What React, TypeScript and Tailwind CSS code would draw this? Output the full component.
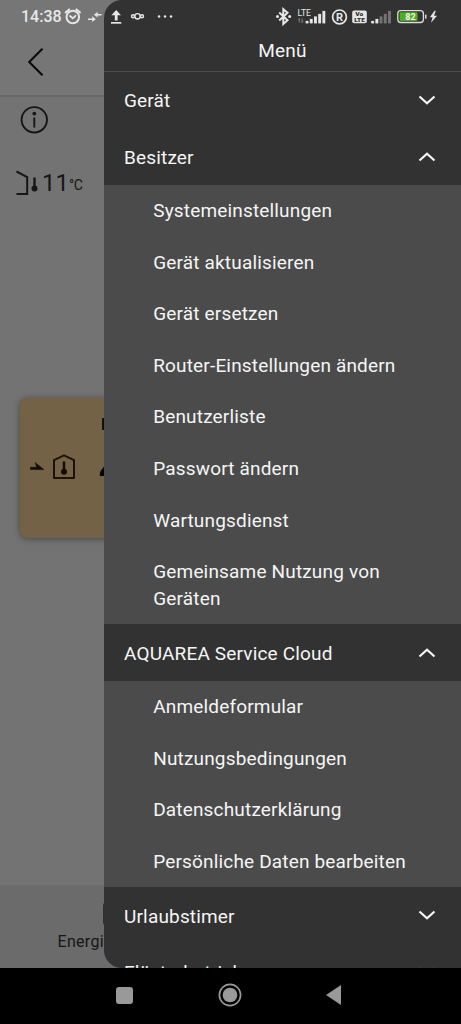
type Section = {
  title: string;
  open?: boolean;
  items?: string[];
};

const sections: Section[] = [
  { title: "Gerät" },
  {
    title: "Besitzer",
    open: true,
    items: [
      "Systemeinstellungen",
      "Gerät aktualisieren",
      "Gerät ersetzen",
      "Router-Einstellungen ändern",
      "Benutzerliste",
      "Passwort ändern",
      "Wartungsdienst",
      "Gemeinsame Nutzung von Geräten",
    ],
  },
  {
    title: "AQUAREA Service Cloud",
    open: true,
    items: [
      "Anmeldeformular",
      "Nutzungsbedingungen",
      "Datenschutzerklärung",
      "Persönliche Daten bearbeiten",
    ],
  },
  { title: "Urlaubstimer" },
  { title: "Flüsterbetrieb" },
];

function Chevron({ up }: { up?: boolean }) {
  return (
    <svg
      className="mb-[3px] h-[10px] w-[18px]"
      viewBox="0 0 18 10"
      fill="none"
      stroke="#f5f5f5"
      strokeWidth="2.2"
    >
      <path d={up ? "M1.5 8.5 9 1.8l7.5 6.7" : "M1.5 1.5 9 8.2l7.5-6.7"} />
    </svg>
  );
}

function Signal({ x, strong }: { x: number; strong: number }) {
  return (
    <g>
      {[2.5, 4.5, 7, 9.5, 12.5].map((h, i) => (
        <rect
          key={h}
          x={x + i * 4.2}
          y={23.4 - h}
          width="2.9"
          height={h}
          fill={i < strong ? "#e6e6e6" : "#747474"}
        />
      ))}
    </g>
  );
}

function StatusBar() {
  return (
    <div className="pointer-events-none absolute inset-x-0 top-0 flex h-8 items-center">
      <span className="mt-0.5 ml-[21px] w-[42px] text-[16px] leading-8 font-medium text-[#e8e8e8]">
        14:38
      </span>
      <svg
        className="h-8 w-[398px] shrink-0"
        viewBox="63 0 398 32"
        fill="none"
        stroke="#e6e6e6"
      >
        {/* alarm clock */}
        <g strokeWidth="2" strokeLinecap="round">
          <circle cx="72.800" cy="17" r="6.300" />
          <path d="m65.600 12.400 3.500-3M80 12.400l-3.500-3" />
          <path d="m70 16 2.800 2.300 2.700-2.500" strokeWidth="1.800" />
        </g>
        <g fill="#e6e6e6" stroke="none">
          {/* transfer arrows */}
          <path d="M88 18.400h4.200v-2.100l3.600 2.900-3.600 2.900v-2.100H88zM101.500 13.900h-3.900v-2.100L94 14.700l3.600 2.900v-2.100h3.900z" />
          {/* upload */}
          <path d="M114.800 20.600v-5.300h-3.400l4.800-5.200 4.800 5.200h-3.400v5.300z" />
          <rect x="111" y="22" width="10.300" height="1.700" />
          <circle cx="159" cy="16.400" r="1.250" />
          <circle cx="165" cy="16.400" r="1.250" />
          <circle cx="171" cy="16.400" r="1.250" />
        </g>
        {/* linked nodes */}
        <g strokeWidth="1.400">
          <circle cx="137.500" cy="16.300" r="2.700" />
          <circle cx="133" cy="16.300" r="1.500" />
          <circle cx="142" cy="16.300" r="1.500" />
        </g>
        {/* bluetooth */}
        <path
          strokeWidth="2"
          d="m279.200 12.600 8.300 7.700-4.200 3.700V9.200l4.200 3.500-8.300 7.700"
        />
        <g fill="#e6e6e6" stroke="none">
          <circle cx="277.500" cy="16.500" r="1.500" />
          <circle cx="289.700" cy="16.500" r="1.500" />
          <text
            x="297.500"
            y="15.500"
            fontSize="9"
            textLength="13.500"
            lengthAdjust="spacingAndGlyphs"
          >
            LTE
          </text>
        </g>
        <path
          strokeWidth=".9"
          stroke="#8a8a8a"
          d="M299.300 22.500v-4l-1.200 1.300M302 18.500v4l1.200-1.300"
        />
        <g stroke="none">
          <Signal x={305.600} strong={5} />
          <Signal x={371.200} strong={2} />
        </g>
        {/* registered mark */}
        <circle cx="339.500" cy="16.900" r="6.900" strokeWidth="1.700" />
        <text
          x="339.600"
          y="20.800"
          fontSize="11"
          fontWeight="700"
          textAnchor="middle"
          fill="#e6e6e6"
          stroke="none"
        >
          R
        </text>
        {/* VoLTE */}
        <rect
          x="352.200"
          y="10.500"
          width="14.600"
          height="12.700"
          rx="2"
          fill="#e6e6e6"
          stroke="none"
        />
        <g fill="#2e2e2e" stroke="none" fontSize="5.200" fontWeight="900">
          <text
            x="355.200"
            y="16"
            textLength="8"
            lengthAdjust="spacingAndGlyphs"
          >
            Vo
          </text>
          <text
            x="354.200"
            y="22"
            textLength="10.800"
            lengthAdjust="spacingAndGlyphs"
          >
            LTE
          </text>
        </g>
        {/* battery */}
        <rect
          x="397.800"
          y="10.700"
          width="25.600"
          height="11.800"
          rx="3"
          stroke="#dcdcdc"
          strokeWidth="1.300"
        />
        <rect
          x="399.600"
          y="12.300"
          width="18"
          height="8.600"
          rx="1.300"
          fill="#4caf1c"
          stroke="none"
        />
        <rect
          x="425"
          y="14.600"
          width="1.500"
          height="4"
          fill="#dcdcdc"
          stroke="none"
        />
        <text
          x="410.400"
          y="19.800"
          fontSize="9"
          fontWeight="700"
          textAnchor="middle"
          fill="#f4f4f4"
          stroke="none"
        >
          82
        </text>
        <path
          d="m434.500 10.700-4.600 6.600h2.700l-1.600 5.500 6-7h-3l1.800-5.100z"
          fill="#e6e6e6"
          stroke="none"
        />
      </svg>
    </div>
  );
}

function HomeScreen() {
  return (
    <div className="flex h-[968px] flex-col bg-[#737373] text-[#161616]">
      <header className="flex h-[97px] shrink-0 items-center border-b-2 border-[#686868] bg-[#767676] pt-[29px] pl-7">
        <svg
          className="h-7 w-4"
          viewBox="0 0 16 28"
          fill="none"
          stroke="#0c0c0c"
          strokeWidth="2.1"
        >
          <path d="M14.500 .7 1.200 14l13.300 13.300" />
        </svg>
      </header>

      <main className="flex-1">
        <svg
          className="mt-[9px] ml-5 h-7 w-7"
          viewBox="0 0 28 28"
          fill="none"
          stroke="#161616"
          strokeWidth="1.900"
        >
          <circle cx="14.300" cy="13.800" r="12.700" />
          <circle cx="14.300" cy="7.600" r="1.900" fill="#161616" stroke="none" />
          <path d="M14.300 11.500v10" />
        </svg>

        <div className="mt-[34px] ml-4 flex h-[30px] items-center">
          <svg
            className="h-[30px] w-[24px]"
            viewBox="16 168 24 30"
            fill="none"
            stroke="#161616"
            strokeWidth="2"
          >
            <path d="m16.500 171.500 10.700 5.500v17H16.500" />
            <path d="M34.500 177.500v11" strokeWidth="2.400" />
            <circle cx="34.500" cy="188.400" r="3" fill="#161616" stroke="none" />
          </svg>
          <span className="ml-[2px] text-[24px] leading-none">11</span>
          <span className="mt-1 text-[14px] leading-none tracking-[-0.4px]">
            °C
          </span>
        </div>

        <div className="mt-[200px] ml-5 flex h-[140px] w-[421px] items-center rounded-lg bg-[#736246] shadow-[0_1px_7px_rgba(0,0,0,0.4)]">
          <svg className="h-[140px] w-[90px]" viewBox="20 398 90 140" fill="none">
            <path
              d="M30.500 469.600v-2.400h6.300l-1.800-4.600 9 7z"
              fill="#120c06"
              stroke="#120c06"
              strokeWidth=".5"
            />
            <path
              d="m54 460.200 10-4.800 10 4.800v17.800H54z"
              stroke="#1c1208"
              strokeWidth="2"
              strokeLinejoin="round"
            />
            <path d="M64 461.500v10.500" stroke="#120c06" strokeWidth="2.500" />
            <circle cx="64" cy="471.800" r="3" fill="#120c06" />
            <path d="M103 418v12" stroke="#120c06" strokeWidth="1.900" />
            <path d="M99.700 476c0-5 2-7 5-10v10z" fill="#080604" />
          </svg>
        </div>
      </main>

      <footer className="flex h-[83px] shrink-0 flex-col bg-[#6b6b6b] pt-[17px] pl-[57.500px] text-[16px] leading-5 tracking-[0.3px]">
        <span className="ml-[45.500px] h-6 w-5 rounded-sm border-2 border-[#303030]" />
        <span className="mt-[6px]">Energie</span>
      </footer>
    </div>
  );
}

function Drawer() {
  return (
    <aside className="absolute top-0 right-0 h-[968px] w-[357px] overflow-hidden rounded-l-[18px] bg-[#323232] text-[19px] tracking-[0.17px] text-[#f5f5f5]">
      <h1 className="flex h-[72px] items-center justify-center border-b border-[#4b4b4b] pt-[31px]">
        Menü
      </h1>
      {sections.map((section) => (
        <section key={section.title}>
          <h2 className="flex h-[56.400px] items-center justify-between pt-[3px] pr-[25px] pl-5">
            {section.title}
            <Chevron up={section.open} />
          </h2>
          {section.items && (
            <ul className="bg-[#4b4b4b]">
              {section.items.map((item) => (
                <li
                  key={item}
                  className="pt-[12.400px] pr-11 pb-[12.200px] pl-[49.200px] leading-[27px]"
                >
                  {item}
                </li>
              ))}
            </ul>
          )}
        </section>
      ))}
    </aside>
  );
}

function NavigationBar() {
  return (
    <nav className="flex h-14 items-center justify-between bg-black pr-[120px] pb-0.5 pl-[116px]">
      <span className="h-[17px] w-[17px] rounded-[3px] bg-[#999999]" />
      <svg className="h-6 w-6" viewBox="0 0 24 24" fill="none">
        <circle cx="12" cy="12" r="10.600" stroke="#999999" strokeWidth="1.700" />
        <circle cx="12" cy="12" r="7.300" fill="#999999" />
      </svg>
      <svg className="h-5 w-[15px]" viewBox="0 0 15 20">
        <path d="M0 10 15 0v20z" fill="#999999" />
      </svg>
    </nav>
  );
}

export default function App() {
  return (
    <div className="relative h-[1024px] w-[461px] overflow-hidden bg-black font-['Roboto',sans-serif]">
      <HomeScreen />
      <NavigationBar />
      <Drawer />
      <StatusBar />
    </div>
  );
}
